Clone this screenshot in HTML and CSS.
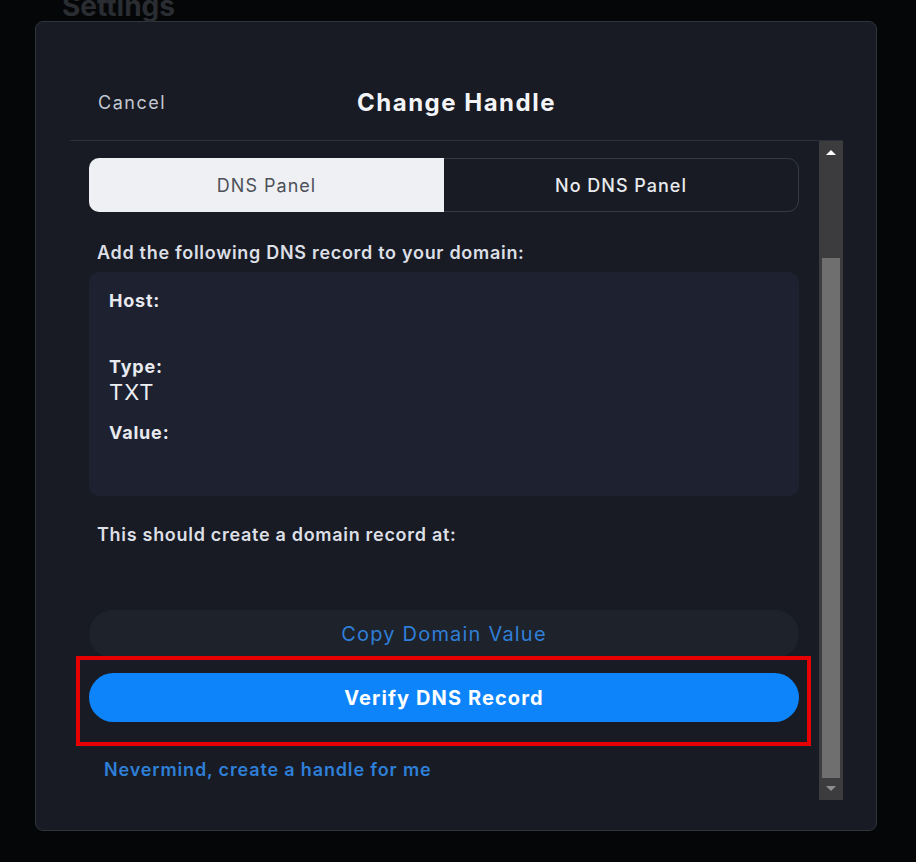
FILE: index.html
```html
<!DOCTYPE html>
<html>
<head>
<meta charset="utf-8">
<link rel="stylesheet" href="styles.css">
</head>
<body>
<div class="page">
  <h1 class="settings">Settings</h1>
  <div class="modal">
    <div class="modal-header">
      <span class="cancel">Cancel</span>
      <h2 class="title">Change Handle</h2>
      <span></span>
    </div>
    <div class="modal-body">
      <div class="content">
        <div class="tabs">
          <div class="tab active">DNS Panel</div>
          <div class="tab">No DNS Panel</div>
        </div>
        <p class="instr">Add the following DNS record to your domain:</p>
        <div class="record">
          <div class="row"><div class="label">Host:</div><div class="value"></div></div>
          <div class="row"><div class="label">Type:</div><div class="value">TXT</div></div>
          <div class="row"><div class="label">Value:</div><div class="value"></div></div>
        </div>
        <p class="instr second">This should create a domain record at:</p>
        <div class="domain-value"></div>
        <button class="btn copy">Copy Domain Value</button>
        <div class="verify-wrap">
          <button class="btn verify">Verify DNS Record</button>
        </div>
        <a class="nevermind">Nevermind, create a handle for me</a>
      </div>
      <div class="scrollbar">
        <div class="sb-top"><span class="arrow-up"></span></div>
        <div class="sb-thumb"></div>
        <div class="sb-bottom"><span class="arrow-down"></span></div>
      </div>
    </div>
  </div>
</div>
</body>
</html>
```

FILE: styles.css
```css
* { box-sizing: border-box; }
html, body { margin: 0; height: 100%; }
body {
  background: #050608;
  font-family: Inter, "Noto Sans", sans-serif;
  overflow: hidden;
}
.page {
  padding: 0 39px 0 35px;
}
.settings {
  margin: -8px 0 0 27px;
  font-size: 28px;
  line-height: 29px;
  height: 29px;
  font-weight: 700;
  color: #2a2d32;
}
.modal {
  border: 1px solid #30343c;
  border-radius: 8px;
  background: #181b23;
  padding: 0 33px 29px 34px;
  height: 810px;
}
.modal-header {
  display: grid;
  grid-template-columns: 1fr auto 1fr;
  align-items: center;
  padding: 61px 0 17px;
  border-bottom: 1px solid #2c303a;
}
.cancel {
  padding-left: 28px;
  font-size: 18px;
  letter-spacing: 1.5px;
  color: #c3c8d2;
  line-height: 40px;
}
.title {
  margin: 0;
  font-size: 24px;
  letter-spacing: 1.5px;
  font-weight: 700;
  color: #f2f4f7;
  line-height: 40px;
}
.modal-body {
  display: flex;
  height: 659px;
}
.content {
  flex: 1;
  padding: 17px 20px 0 19px;
}
.tabs {
  display: grid;
  grid-template-columns: 1fr 1fr;
  height: 54px;
  border: 1px solid #353a45;
  border-radius: 11px;
}
.tab {
  display: flex;
  align-items: center;
  justify-content: center;
  font-size: 18px;
  letter-spacing: 1px;
  font-weight: 500;
  color: #e8eaee;
}
.tab.active {
  background: #eef0f3;
  border-radius: 10px 0 0 10px;
  color: #4d5058;
  font-weight: 400;
  margin: -1px 0 -1px -1px;
}
.instr {
  margin: 29px 0 0;
  padding-left: 8px;
  font-size: 18px;
  letter-spacing: 0.7px;
  line-height: 24px;
  font-weight: 600;
  color: #dcdfe5;
}
.instr.second { margin-top: 27px; }
.record {
  margin-top: 7px;
  background: #1d2130;
  border-radius: 10px;
  padding: 18px 20px 8px;
}
.row { margin-bottom: 16px; }
.label {
  font-size: 18px;
  letter-spacing: 0.8px;
  line-height: 22px;
  font-weight: 700;
  color: #e8eaef;
}
.value {
  min-height: 28px;
  font-size: 22px;
  letter-spacing: 1px;
  line-height: 28px;
  color: #eef0f3;
}
.domain-value { height: 63px; }
.btn {
  display: block;
  width: 100%;
  border: none;
  font-family: inherit;
  cursor: pointer;
}
.copy {
  height: 48px;
  border-radius: 24px;
  background: #1e222b;
  color: #2f7fd8;
  font-size: 20px;
  letter-spacing: 1.2px;
}
.verify-wrap {
  position: relative;
  margin-top: 15px;
}
.verify-wrap::after {
  content: "";
  position: absolute;
  top: -17px;
  bottom: -24px;
  left: -13px;
  right: -12px;
  border: 4px solid #e60000;
  pointer-events: none;
}
.verify {
  height: 49px;
  border-radius: 25px;
  background: #0d84fa;
  color: #ffffff;
  font-size: 20px;
  letter-spacing: 1.1px;
  font-weight: 700;
}
.nevermind {
  display: block;
  margin-top: 36px;
  padding-left: 15px;
  font-size: 18px;
  letter-spacing: 0.85px;
  line-height: 24px;
  font-weight: 600;
  color: #2e7fd8;
}
.scrollbar {
  width: 24px;
  display: flex;
  flex-direction: column;
  background: #3c3c3e;
}
.sb-top {
  height: 117px;
  display: flex;
  justify-content: center;
  padding-top: 9px;
}
.arrow-up {
  width: 0; height: 0;
  border-left: 5px solid transparent;
  border-right: 5px solid transparent;
  border-bottom: 5px solid #ffffff;
}
.sb-thumb {
  flex: 1;
  margin: 0 3px;
  background: #6f6f70;
}
.sb-bottom {
  height: 22px;
  display: flex;
  justify-content: center;
  padding-top: 8px;
}
.arrow-down {
  width: 0; height: 0;
  border-left: 5px solid transparent;
  border-right: 5px solid transparent;
  border-top: 5px solid #8d8d8f;
}
```
